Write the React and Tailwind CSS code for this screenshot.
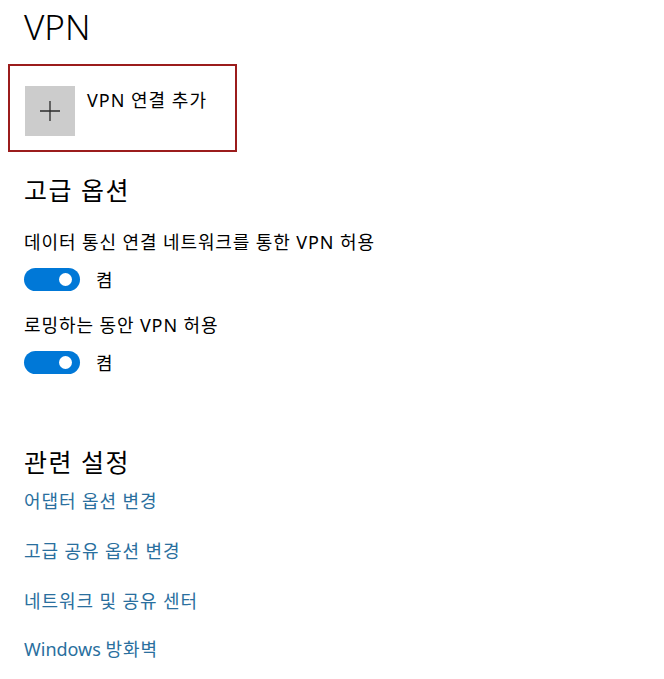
const font = { fontFamily: '"Noto Sans", "Noto Sans CJK KR", sans-serif' }

function Toggle() {
  return (
    <div className="flex items-center gap-[16px] h-[23px]">
      <div className="w-[56px] h-[23px] rounded-full bg-[#0078d7] flex items-center justify-end pr-[8px]">
        <span className="w-[13px] h-[13px] rounded-full bg-white" />
      </div>
      <span className="text-[18px] leading-none text-black">켬</span>
    </div>
  )
}

const links = ['어댑터 옵션 변경', '고급 공유 옵션 변경', '네트워크 및 공유 센터']

export default function App() {
  return (
    <div className="w-[664px] h-[679px] bg-white pl-[24px] pt-[6px]" style={font}>
      <h1 className="text-[35px] font-light leading-[42px] text-black">VPN</h1>

      {/* add connection tile, keyboard-focus outline */}
      <div className="mt-[16px] -ml-[16px] w-[229px] h-[88px] border-2 border-[#9b1c1c] flex items-start pt-[20px] pl-[15px]">
        <div className="w-[50px] h-[50px] bg-[#cccccc] flex items-center justify-center">
          <svg width="20" height="20" viewBox="0 0 20 20">
            <path d="M10 0V20M0 10H20" stroke="#2b2b2b" strokeWidth="1.3" fill="none" />
          </svg>
        </div>
        <span className="ml-[12px] mt-[2px] text-[18px] leading-[24px] tracking-[1px] text-black">VPN 연결 추가</span>
      </div>

      <h2 className="mt-[21px] text-[25px] leading-[34px] tracking-[1.5px] text-black">고급 옵션</h2>

      <p className="mt-[23px] text-[18px] leading-[24px] tracking-[0.9px] text-black">데이터 통신 연결 네트워크를 통한 VPN 허용</p>
      <div className="mt-[14px]"><Toggle /></div>

      <p className="mt-[22px] text-[18px] leading-[24px] tracking-[0.9px] text-black">로밍하는 동안 VPN 허용</p>
      <div className="mt-[14px]"><Toggle /></div>

      <h2 className="mt-[71px] text-[25px] leading-[34px] tracking-[1.5px] text-black">관련 설정</h2>

      <div className="flex flex-col mt-[10px] gap-[26px]">
        {links.map(l => (
          <a key={l} className="text-[18px] leading-[24px] tracking-[0.9px] text-[#2a6f9e] cursor-pointer">{l}</a>
        ))}
        <a className="-mt-[2px] text-[18px] leading-[24px] text-[#2a6f9e] cursor-pointer">
          Windows <span className="tracking-[0.9px]">방화벽</span>
        </a>
      </div>
    </div>
  )
}
